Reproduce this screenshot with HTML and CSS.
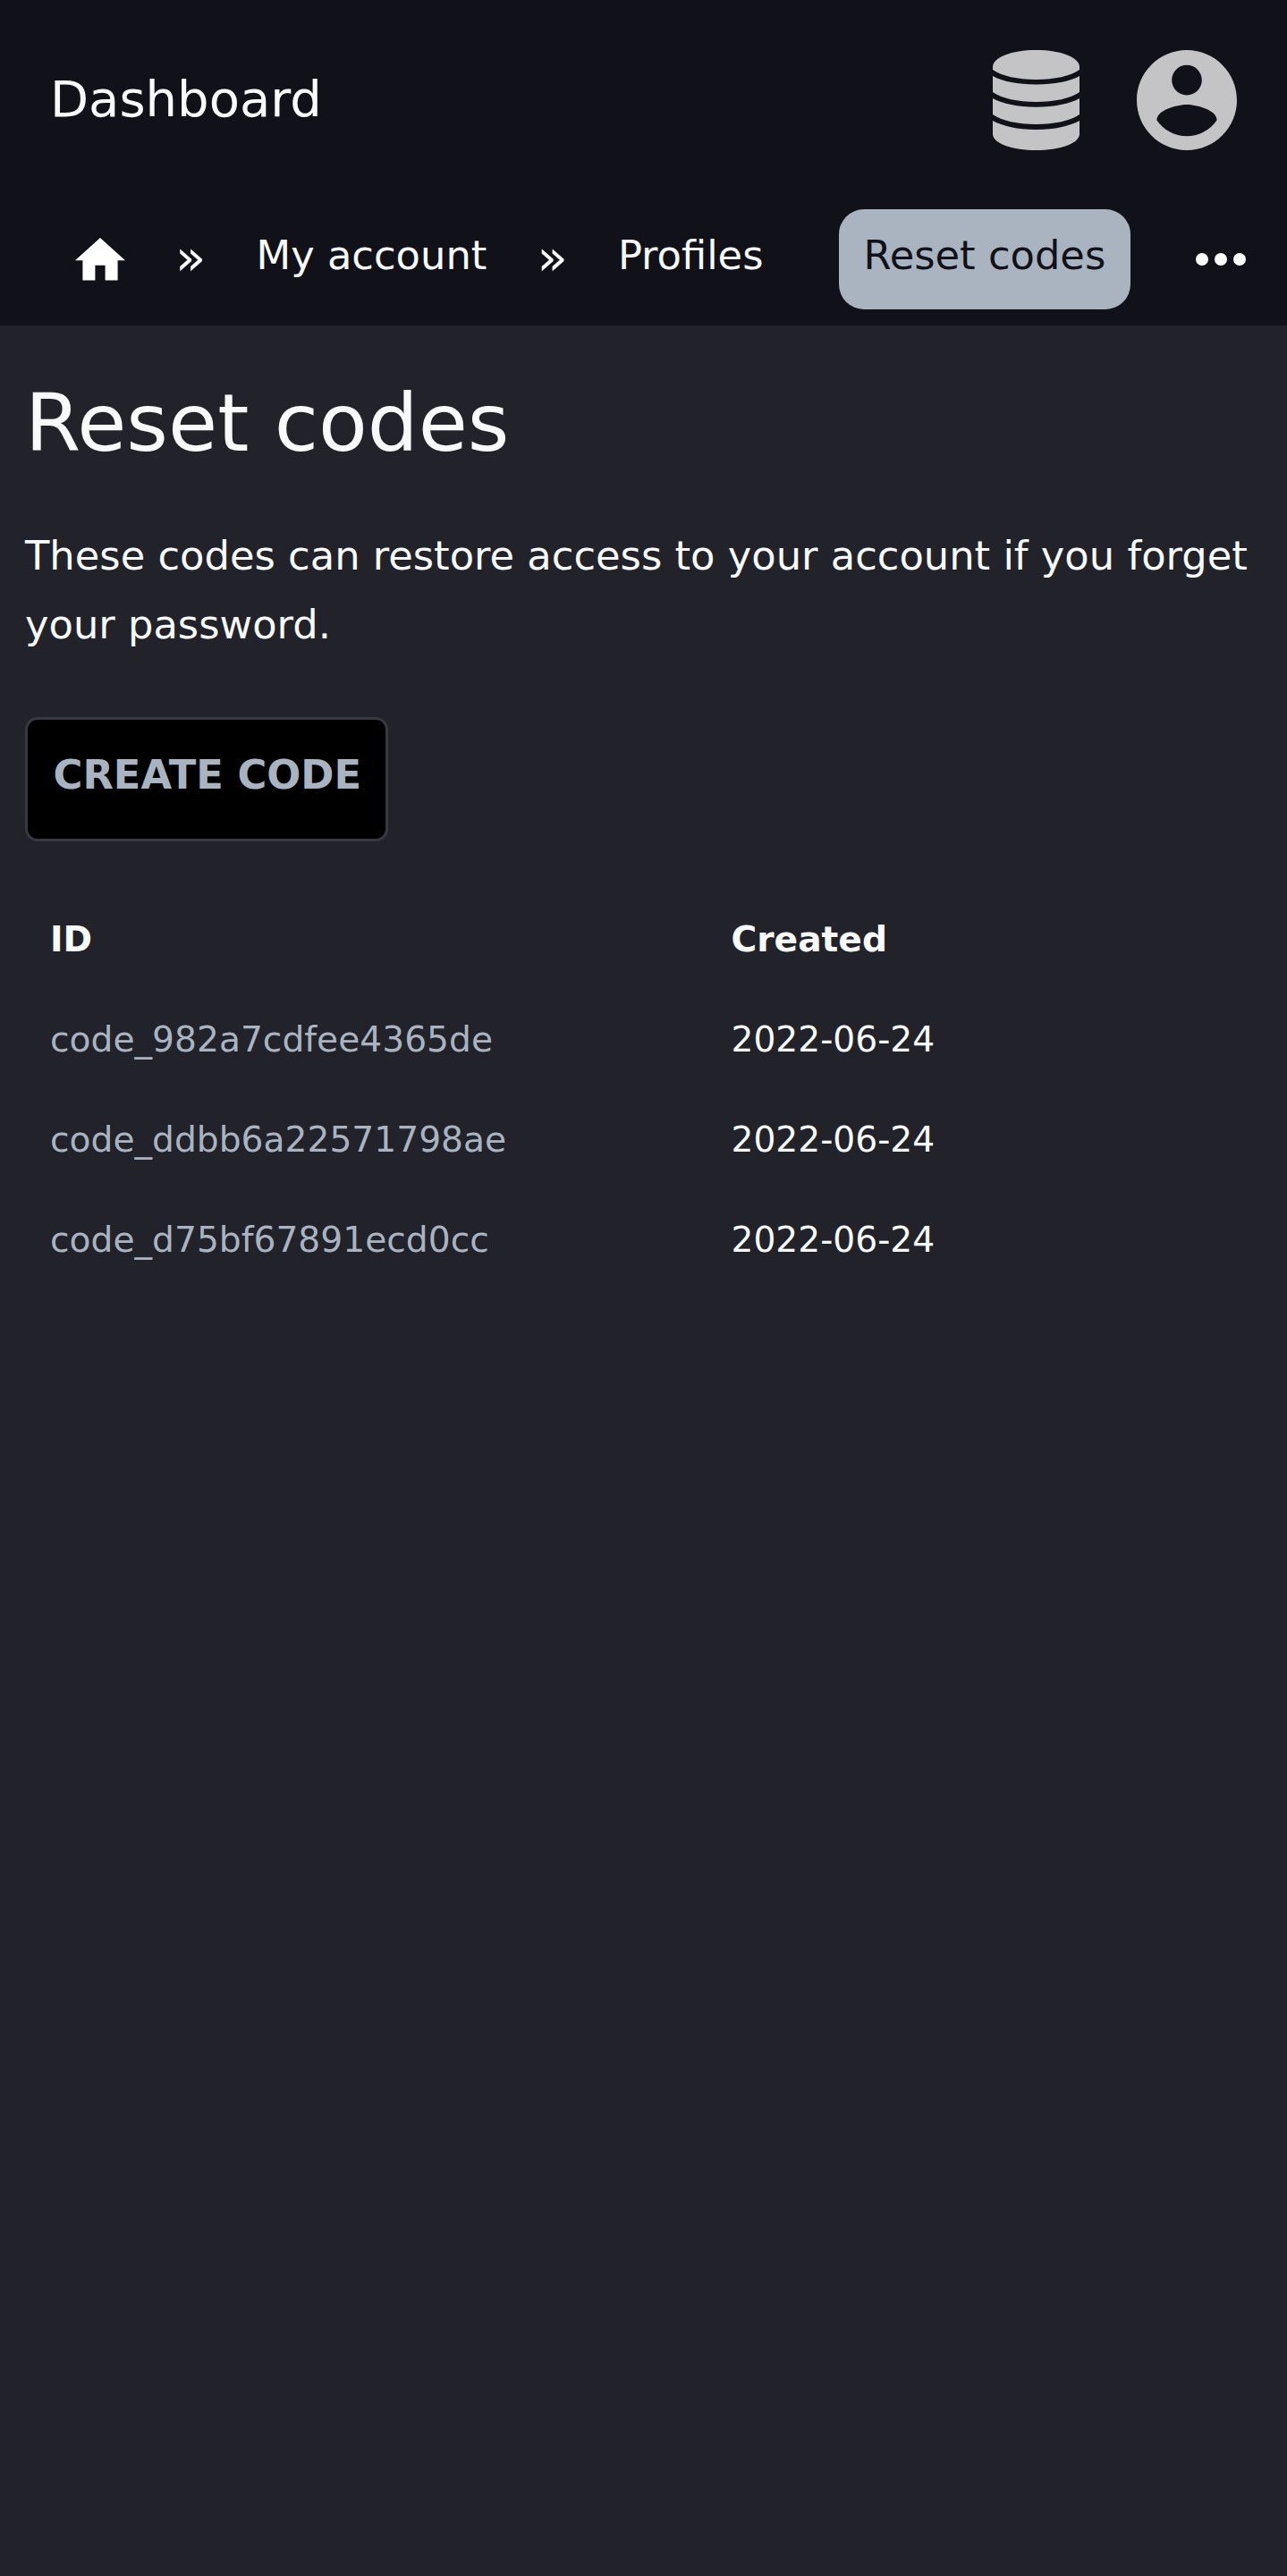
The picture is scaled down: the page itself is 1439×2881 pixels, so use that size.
FILE: index.html
```html
<!DOCTYPE html>
<html lang="en">
<head>
<meta charset="utf-8">
<title>Reset codes</title>
<link rel="stylesheet" href="styles.css">
</head>
<body>
<header class="header">
  <div class="topbar">
    <a class="brand">Dashboard</a>
    <div class="menus">
      <svg class="icon-data" viewBox="0 0 97 112">
        <path d="M0 19C0 8 21 0 48.500 0S97 8 97 19V22C87 29 69 33 48.500 33S10 29 0 22Z"/>
        <path d="M0 29C11 35 28 38.500 48.500 38.500S86 35 97 29V47C87 54 69 58 48.500 58S10 54 0 47Z"/>
        <path d="M0 54C11 60 28 63.700 48.500 63.700S86 60 97 54V72C87 79 69 83 48.500 83S10 79 0 72Z"/>
        <path d="M0 79C11 85 28 89 48.500 89S86 85 97 79V95C95 105 75 112 48.500 112S2 105 0 95Z"/>
      </svg>
      <svg class="icon-account" viewBox="2 2 20 20"><path d="M12 2C6.480 2 2 6.480 2 12s4.480 10 10 10 10-4.480 10-10S17.520 2 12 2zm0 3c1.660 0 3 1.340 3 3s-1.340 3-3 3-3-1.340-3-3 1.340-3 3-3zm0 14.200c-2.500 0-4.710-1.280-6-3.220.030-1.990 4-3.080 6-3.080 1.990 0 5.970 1.090 6 3.080-1.290 1.940-3.500 3.220-6 3.220z"/></svg>
    </div>
  </div>
  <nav class="crumbs">
    <svg class="icon-home" viewBox="2 3 20 17"><path d="M10 20v-6h4v6h5v-8h3L12 3 2 12h3v8z"/></svg>
    <span class="separator">»</span>
    <a class="crumb">My account</a>
    <span class="separator">»</span>
    <a class="crumb">Profiles</a>
    <a class="crumb current">Reset codes</a>
    <svg class="icon-more" viewBox="4 10 16 4"><path d="M6 10a2 2 0 100 4 2 2 0 000-4zm12 0a2 2 0 100 4 2 2 0 000-4zm-6 0a2 2 0 100 4 2 2 0 000-4z"/></svg>
  </nav>
</header>
<main class="content">
  <h1 class="title">Reset codes</h1>
  <p class="intro">These codes can restore access to your account if you forget your password.</p>
  <button class="create">CREATE CODE</button>
  <table class="codes">
    <thead><tr><th class="id">ID</th><th>Created</th></tr></thead>
    <tbody>
      <tr><td class="id"><a>code_982a7cdfee4365de</a></td><td>2022-06-24</td></tr>
      <tr><td class="id"><a>code_ddbb6a22571798ae</a></td><td>2022-06-24</td></tr>
      <tr><td class="id"><a>code_d75bf67891ecd0cc</a></td><td>2022-06-24</td></tr>
    </tbody>
  </table>
</main>
</body>
</html>
```
FILE: styles.css
```css
* { box-sizing: border-box; }
body {
  margin: 0;
  min-height: 2881px;
  background: #22222a;
  color: #f8f9fa;
  font-family: "DejaVu Sans", sans-serif;
  font-size: 44.8px;
}
.header { height: 364px; background: #11111a; }
.topbar {
  display: flex;
  justify-content: space-between;
  height: 224px;
  padding: 56px;
}
.brand { font-size: 56px; line-height: 109px; }
.menus { display: flex; gap: 64px; }
.icon-data { width: 97px; height: 112px; fill: #c4c4c6; }
.icon-account { width: 112px; height: 112px; fill: #c4c4c6; }
.crumbs { display: flex; padding: 10px 46px 0 84px; height: 140px; }
.icon-home { width: 56px; height: 47.6px; margin-top: 32.4px; fill: #fff; }
.separator {
  width: 90.5px;
  margin: 0 28px;
  font-size: 56px;
  line-height: 108px;
  text-align: center;
}
.crumb { line-height: 103px; }
.current {
  height: 112px;
  margin-left: 84px;
  padding: 0 28px;
  border-radius: 28px;
  background: #a9b4c0;
  color: #11111a;
}
.icon-more { width: 56px; height: 14px; margin: 49px 0 0 auto; fill: #fff; }
.content { padding: 55px 28px; }
.title { margin: 0; font-size: 89.6px; font-weight: 400; line-height: 108px; }
.intro { margin: 56px 0 65px; line-height: 77px; }
.create {
  display: block;
  height: 139px;
  padding: 0 26.5px 10px 28.5px;
  border: 3px solid #343a40;
  border-radius: 14px;
  background: #000;
  color: #a9b4c0;
  font: bold 44.8px "DejaVu Sans", sans-serif;
}
.codes { width: 100%; margin-top: 53px; border-collapse: collapse; font-size: 39.2px; }
.codes th, .codes td { height: 112px; padding: 0 28px; text-align: left; }
.codes .id { width: 761.5px; }
.codes a { color: #a9b4c0; }
```
